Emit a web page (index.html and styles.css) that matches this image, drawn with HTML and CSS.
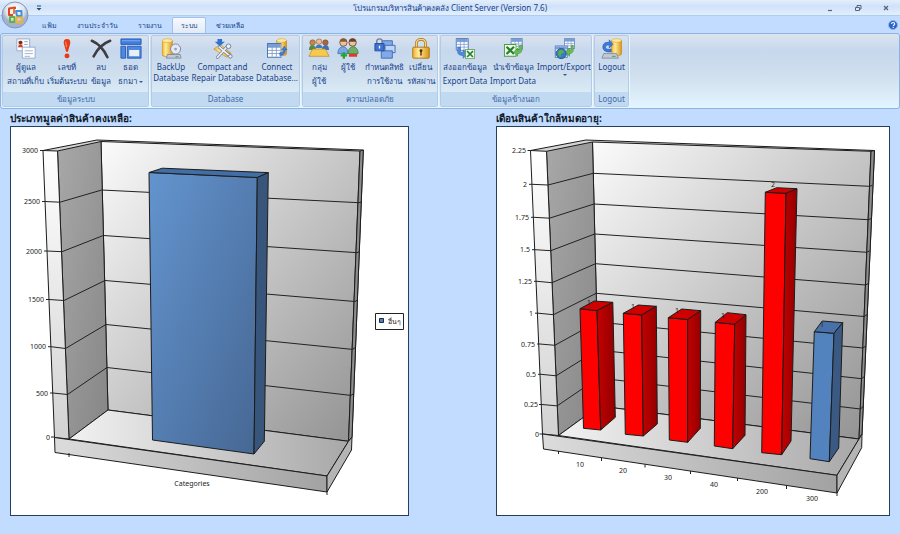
FILE: index.html
```
<!DOCTYPE html>
<html lang="th">
<head>
<meta charset="utf-8">
<title>โปรแกรมบริหารสินค้าคงคลัง Client Server (Version 7.6)</title>
<link rel="stylesheet" href="styles.css">
</head>
<body>
<svg class="defs" aria-hidden="true">
  <defs>
    <linearGradient id="gold" x1="0" x2="1"><stop offset="0" stop-color="#f3b128"/><stop offset=".35" stop-color="#ffeb9b"/><stop offset="1" stop-color="#dc9410"/></linearGradient>
    <linearGradient id="side" x1="0" y1="0" x2="1" y2="1"><stop offset="0" stop-color="#a8a8a8"/><stop offset="1" stop-color="#868686"/></linearGradient>
    <linearGradient id="back" x1="0" y1="0" x2="1" y2="1"><stop offset="0" stop-color="#fbfbfb"/><stop offset="1" stop-color="#929292"/></linearGradient>
    <linearGradient id="edge" x1="0" y1="0" x2="0" y2="1"><stop offset="0" stop-color="#ffffff"/><stop offset="1" stop-color="#d2d2d2"/></linearGradient>
    <linearGradient id="floor" x1="0" x2="1"><stop offset="0" stop-color="#f2f2f2"/><stop offset="1" stop-color="#a8a8a8"/></linearGradient>
    <linearGradient id="slab" x1="0" x2="1"><stop offset="0" stop-color="#dcdcdc"/><stop offset="1" stop-color="#a2a2a2"/></linearGradient>
    <linearGradient id="blue" x1="0" y1="0" x2="1" y2="1"><stop offset="0" stop-color="#6394cf"/><stop offset="1" stop-color="#466793"/></linearGradient>
    <linearGradient id="darkred" x1="0" x2="1"><stop offset="0" stop-color="#c40000"/><stop offset="1" stop-color="#920000"/></linearGradient>
    <symbol id="disk" viewBox="0 0 12 22"><path d="M0 3v16c0 3 12 3 12 0V3z" fill="url(#gold)" stroke="#c08212" stroke-width=".7"/><ellipse cx="6" cy="3" rx="5.7" ry="2.2" fill="#ffe9a0" stroke="#d39a20" stroke-width=".6"/></symbol>
    <symbol id="table" viewBox="0 0 14 14"><path d="M.5.5h13v13H.5z" fill="#fff" stroke="#4a74b8"/><path d="M1 1h12v3H1z" fill="#7c9fd8"/><path d="M5 1v12M9 1v12M1 4h12M1 7h12M1 10h12" stroke="#7698cc" stroke-width=".8"/></symbol>
    <symbol id="excel" viewBox="0 0 12 12"><path d="M.5.5h11v11H.5z" fill="#eff8e9" stroke="#4e9841"/><path d="M2.5 2.5l7 7M9.5 2.5l-7 7" stroke="#268230" stroke-width="2"/></symbol>
  </defs>
</svg>

<header class="shell">
  <button class="orb" aria-label="Office">
    <svg viewBox="0 0 28 28">
      <defs><radialGradient id="orbfill" cy=".3"><stop offset="0" stop-color="#fff"/><stop offset=".7" stop-color="#dfe5ee"/><stop offset="1" stop-color="#9fb2cf"/></radialGradient></defs>
      <circle cx="14" cy="14" r="13" fill="url(#orbfill)" stroke="#8497b6"/>
      <g fill="none" stroke-width="2" stroke-linejoin="round">
        <path d="M14 8V6.500l-6 1V14h4" stroke="#e2461b"/><path d="M13 8v5" stroke="#ee7a2e"/>
        <path d="M15 10h5.500v5H16z" stroke="#3f91dc"/>
        <path d="M9 16h4.500v5H9z" stroke="#64b04a"/>
        <path d="M15.500 16.500H21v5h-5.500z" stroke="#f2b233"/>
      </g>
    </svg>
  </button>
  <div class="titlebar">
    <button class="quick" aria-label="Customize"><svg viewBox="0 0 6 6"><path d="M1 1h4" stroke="#27487c"/><path d="M.5 3h5L3 5.500z" fill="#27487c"/></svg></button>
    <h1>โปรแกรมบริหารสินค้าคงคลัง <span lang="en">Client Server (Version 7.6)</span></h1>
    <div class="window-buttons">
      <button aria-label="Minimize"><svg viewBox="0 0 8 8"><path d="M2 6.500h4" stroke="#56657e" stroke-width="1.200"/></svg></button>
      <button aria-label="Restore"><svg viewBox="0 0 8 8"><path d="M3 3V1.500h4V5H6M1.500 3.500h4v3h-4z" fill="none" stroke="#56657e"/></svg></button>
      <button aria-label="Close"><svg viewBox="0 0 8 8"><path d="M2 2l4 4M6 2L2 6" stroke="#56657e" stroke-width="1.300"/></svg></button>
    </div>
  </div>
  <nav class="tabs">
    <a href="#file">แฟ้ม</a>
    <a href="#daily">งานประจำวัน</a>
    <a href="#reports">รายงาน</a>
    <a href="#system" class="active" aria-current="page">ระบบ</a>
    <a href="#help">ช่วยเหลือ</a>
    <button class="help" aria-label="Help"><svg viewBox="0 0 10 10"><circle cx="5" cy="5" r="4.500" fill="#2b63cc" stroke="#90b3e8"/><path d="M3.500 4c0-2 3.200-2 3.200 0 0 1-1.500 1-1.500 2.200M5.200 7v1" fill="none" stroke="#fff" stroke-width="1.100"/></svg></button>
  </nav>

  <div class="ribbon">
    <section class="group g-system">
      <div class="tools">
        <button><svg viewBox="0 0 24 24"><path d="M2 1h14v13H2z" fill="#fff" stroke="#8ea8cf"/><path d="M3.500 3h5v7h-5z" fill="#eec4b4"/><circle cx="6" cy="5" r="2" fill="#7d2918"/><path d="M3.500 10c0-4 5-4 5 0z" fill="#c8402c"/><path d="M10 4h4M10 7h4" stroke="#8c9fbd"/><path d="M8 10h14v12H8z" fill="#fff" stroke="#8ea8cf"/><path d="M10.500 14h9M10.500 17h9M10.500 20h6" stroke="#9badc8"/></svg><span>ผู้ดูแล<br>สถานที่เก็บ</span></button>
        <button><svg viewBox="0 0 24 24"><path d="M12 1c3 0 4 2 3.500 5L13 15h-2L8.500 6C8 3 9 1 12 1z" fill="#e83b17"/><circle cx="12" cy="19.500" r="2.700" fill="#e83b17"/><path d="M10.500 4l1 6" stroke="#ff9c70"/></svg><span>เลขที่<br>เริ่มต้นระบบ</span></button>
        <button><svg viewBox="0 0 24 24"><path d="M2 3c7 3 13 9 17 18M22 3C14 6 8 12 4 20" fill="none" stroke="#3d3d42" stroke-width="2.800" stroke-linecap="round"/></svg><span>ลบ<br>ข้อมูล</span></button>
        <button><svg viewBox="0 0 24 24"><path d="M1 1h22v6H1z" fill="#3f7ee0" stroke="#2b5bb4"/><path d="M2 3h20" stroke="#83b0f4"/><path d="M1 9h5v13H1zM8 9h15v13H8z" fill="#4d87df" stroke="#2b5bb4"/><path d="M10 13h11v7H10z" fill="#e7effb"/></svg><span>ธอด<br>ธกมา<i class="drop"></i></span></button>
      </div>
      <h2>ข้อมูลระบบ</h2>
    </section>
    <section class="group g-database" lang="en">
      <div class="tools">
        <button><svg viewBox="0 0 24 24"><use href="#disk" x="2" y="0" width="12" height="21"/><circle cx="17" cy="12" r="5.500" fill="#e5e8f0" stroke="#7784a0"/><circle cx="17" cy="12" r="1.500" fill="#8fa0bd"/><path d="M8 18h14l1 4H7z" fill="#c2c9d6" stroke="#68748c" stroke-width=".7"/><path d="M17 20.500h3" stroke="#33a444"/></svg><span>BackUp<br>Database</span></button>
        <button><svg viewBox="0 0 24 24"><path d="M2 12l7-5 12 10-5 4z" fill="url(#gold)" stroke="#bb8220" stroke-width=".6"/><path d="M6 1h5v3h3l-5.500 5L3 4h3z" fill="#2e73d0"/><path d="M6 21L17 9M8 10l12 10" stroke="#727f94" stroke-width="3.500" stroke-linecap="round"/><path d="M6 21L17 9M8 10l12 10" stroke="#edf0f5" stroke-width="2" stroke-linecap="round"/><circle cx="18" cy="9" r="2.500" fill="#edf0f5" stroke="#727f94"/><circle cx="20" cy="20" r="2" fill="#edf0f5" stroke="#727f94"/></svg><span>Compact and<br>Repair Database</span></button>
        <button><svg viewBox="0 0 24 24"><use href="#disk" x="11" y="0" width="12" height="20"/><use href="#table" x="1" y="5" width="16" height="17"/><path d="M15 19c4 0 6-2 6-6l2 0-3-4-3 4h2c0 2-1 3-4 3z" fill="#3b80df" stroke="#2159ad" stroke-width=".5"/></svg><span>Connect<br>Database...</span></button>
      </div>
      <h2>Database</h2>
    </section>
    <section class="group g-security">
      <div class="tools">
        <button><svg viewBox="0 0 24 24"><g stroke="#705038" stroke-width=".6"><circle cx="5" cy="5" r="3" fill="#c8844d"/><circle cx="12" cy="4" r="3" fill="#efbd8e"/><circle cx="19" cy="5" r="3" fill="#ad6335"/></g><path d="M1 13c0-7 7-7 8 0z" fill="#568b43"/><path d="M8 11c0-5 8-5 8 0z" fill="#3d78c0"/><path d="M15 13c1-7 8-7 8 0z" fill="#3e70b8"/><path d="M5 12h14l4 8H1z" fill="#f7c94c" stroke="#b98219" stroke-width=".7"/></svg><span>กลุ่ม<br>ผู้ใช้</span></button>
        <button><svg viewBox="0 0 24 24"><circle cx="7" cy="5" r="4" fill="#eec299" stroke="#815738"/><path d="M3 4c0-5 8-5 8 0z" fill="#8a5a34"/><circle cx="17" cy="5" r="4" fill="#eec299" stroke="#704630"/><path d="M13 4c0-5 8-5 8 0z" fill="#654431"/><path d="M1 17c0-10 11-10 11 0z" fill="#79a7e2" stroke="#4776b8"/><path d="M12 17c0-10 11-10 11 0z" fill="#72ad67" stroke="#478542"/><path d="M4 19h7M7.500 15.500v7" stroke="#24a62e" stroke-width="2.500"/><path d="M13 19h9" stroke="#dc3b28" stroke-width="3"/></svg><span>ผู้ใช้</span></button>
        <button><svg viewBox="0 0 24 24"><path d="M9 3h11v8H9z" fill="#82a9e9" stroke="#3d68b5"/><path d="M12 8h11v8H12z" fill="#bdd2f4" stroke="#3d68b5"/><path d="M8 14h12v8H8z" fill="#82a9e9" stroke="#3d68b5"/><path d="M3 7V4c0-4 6-4 6 0v3" fill="none" stroke="#718098" stroke-width="1.500"/><path d="M1 6h10v8H1z" fill="#3e73d3" stroke="#254c99"/><path d="M6 8.500v3" stroke="#fff" stroke-width="1.500"/></svg><span>กำหนดสิทธิ<br>การใช้งาน</span></button>
        <button><svg viewBox="0 0 24 24"><path d="M7 11V6c0-6 10-6 10 0v5" fill="none" stroke="#a8741a" stroke-width="3"/><path d="M7 11V6c0-6 10-6 10 0v5" fill="none" stroke="#f5d57a" stroke-width="1.500"/><rect x="3" y="10" width="18" height="12" rx="1" fill="url(#gold)" stroke="#a8741a"/><circle cx="12" cy="14" r="1.600" fill="#493313"/><path d="M12 14v5" stroke="#493313" stroke-width="1.500"/></svg><span>เปลี่ยน<br>รหัสผ่าน</span></button>
      </div>
      <h2>ความปลอดภัย</h2>
    </section>
    <section class="group g-external">
      <div class="tools">
        <button><svg viewBox="0 0 24 24"><use href="#table" x="1" y="0" width="16" height="14"/><path d="M4 10v5c0 3 2 4 6 4v3l5-5-5-4v3c-2 0-3 0-3-2v-4z" fill="#4d8de2" stroke="#285faf" stroke-width=".6"/><use href="#excel" x="12" y="12" width="11" height="11"/></svg><span>ส่งออกข้อมูล<br>Export Data</span></button>
        <button><svg viewBox="0 0 24 24"><use href="#table" x="9" y="0" width="14" height="13"/><use href="#excel" x="2" y="5" width="14" height="17"/><path d="M22 8c0 7-1 9-5 9v3l-4-5 4-4v3c2 0 2-2 2-6z" fill="#6cbd50" stroke="#358a30" stroke-width=".6"/></svg><span>นำเข้าข้อมูล<br>Import Data</span></button>
        <button><svg viewBox="0 0 24 24"><use href="#table" x="12" y="0" width="12" height="12"/><use href="#table" x="0" y="8" width="18" height="14"/><circle cx="9" cy="17" r="5.500" fill="#367bc6" stroke="#24568f"/><path d="M6 14c2-2 3 0 5-1l1 3-3 1-1 4c-2-1-3-4-2-7z" fill="#5bb148"/><path d="M22 8c1 7-1 9-4 9v3l-4-5 4-4v3c2 0 2-2 2-6z" fill="#6cbd50" stroke="#358a30" stroke-width=".6"/></svg><span>Import/Export</span><i class="drop"></i></button>
      </div>
      <h2>ข้อมูลข้างนอก</h2>
    </section>
    <section class="group g-logout" lang="en">
      <div class="tools">
        <button><svg viewBox="0 0 24 24"><use href="#disk" x="11" y="0" width="12" height="20"/><path d="M11 15c-6 1-9-2-9-5 0-4 3-6 7-5V2l4 5-4 4V8c-2-1-4 0-4 2 0 2 2 3 6 2z" fill="#3a7be0" stroke="#1e50a6" stroke-width=".6"/><path d="M3 17h14l2 5H1z" fill="#c2c9d6" stroke="#68748c" stroke-width=".7"/><path d="M12 20h4" stroke="#35a644"/></svg><span>Logout</span></button>
      </div>
      <h2>Logout</h2>
    </section>
  </div>
</header>

<main class="charts">
  <section>
    <h2>ประเภทมูลค่าสินค้าคงเหลือ:</h2>
    <svg class="chart" viewBox="11 127 397 388" role="img" aria-label="ประเภทมูลค่าสินค้าคงเหลือ">
      <g class="walls">
        <path d="M43 150.500L97 140l266.300 10L352 437l-3.500 4-12-2z" fill="#d4d4d4"/>
        <path d="M101 141.500L360 151l-11.500 290.300L108 410z" fill="url(#back)"/>
        <path d="M57.500 151L101 141.500 108 410l-39 29z" fill="url(#side)"/>
        <path d="M43 150.500h0l14.500.5L69 439l-14.500-1.500z" fill="url(#edge)"/>
        <path d="M360 151l3.300-1L352 437l-3.500 4.300z" fill="#8d8d8d"/>
        <path d="M69 439l39-29 240.500 31.300L327 476z" fill="url(#floor)"/>
        <path d="M54.500 437.500L327 476v16L55 452.500z" fill="url(#slab)"/>
        <path d="M327 476l21.500-34.700 3.500-4.300-.5 13L327 492z" fill="#b5b5b5"/>
      </g>
      <g class="grid">
        <path d="M42 201.500l3 0 15 .7 41.700-12.200L359 202.700l2.300-.7"/>
        <path d="M44 251l3 0 15 .7 41.300-16.200L357 252.700l2.300-1"/>
        <path d="M46 299.500l3 0 15 1 41-20L355 301.500l2.500-1.500"/>
        <path d="M48 346.700l3 0 14.500 1.800 40.500-24L352.500 349.400l3-2"/>
        <path d="M50 393l3 0 14.500 1.500 39.500-27L351 395.400l3-2"/>
        <path d="M51 437h3M40 150.500h3M69 453v4M327 492v3"/>
      </g>
      <g class="solid">
        <path d="M149 172.500l108.300 5L254 454l-101.500-14z" fill="url(#blue)"/>
        <path d="M149 172.500l13.300-4.300 106 4.400-11 4.900z" fill="#426da5"/>
        <path d="M257.300 177.500l11-4.900-4 268.700L254 454z" fill="#38557b"/>
      </g>
      <g class="labels end">
        <text x="38" y="153">3000</text><text x="40" y="204">2500</text><text x="42" y="254">2000</text><text x="44" y="302">1500</text><text x="46" y="349">1000</text><text x="48" y="396">500</text><text x="50" y="440">0</text>
      </g>
      <g class="labels"><text x="192" y="486">Categories</text></g>
      <path class="legend" d="M375.500 313.500h28v16h-28z"/>
      <path d="M379.500 318.500h4v4h-4z" fill="#4f81bd" stroke="#1d2b40"/>
      <g class="labels"><text x="394" y="324">อื่นๆ</text></g>
    </svg>
  </section>
  <section>
    <h2>เดือนสินค้าใกล้หมดอายุ:</h2>
    <svg class="chart" viewBox="497 127 392 388" role="img" aria-label="เดือนสินค้าใกล้หมดอายุ">
      <g class="walls">
        <path d="M530.500 150.500L586 140l288.500 10.500L862 434l-3 5-12-2z" fill="#d4d4d4"/>
        <path d="M592.500 142L871 151.300 859 439l-260-33z" fill="url(#back)"/>
        <path d="M546.500 151.300L592.500 142 599 406l-40.500 29.500z" fill="url(#side)"/>
        <path d="M530.500 150.500l16 .8 12 284.200-16-1.500z" fill="url(#edge)"/>
        <path d="M871 151.300l3.500-.8L862 434l-3 5z" fill="#8d8d8d"/>
        <path d="M558.500 435.500L599 406l260 33-22 36.300z" fill="url(#floor)"/>
        <path d="M542.500 434L837 475.300V493l-293.500-44z" fill="url(#slab)"/>
        <path d="M837 475.300L859 439l3-5-.3 13.700L837 493z" fill="#b5b5b5"/>
      </g>
      <g class="grid">
        <path d="M529 184.300h3l16 .7 45.300-11.700 276.200 13 3-1"/>
        <path d="M531 217.300h3l15.500.9 44.500-14.200 274 15.700 3-1"/>
        <path d="M532 249.700h3l15.800 1 43.900-16.700 272 18.300 3-1.500"/>
        <path d="M534 281.300h3l15 1.400 43.500-19 270 21.300 3-1.500"/>
        <path d="M535 313.200h3l15.500 1.500 42.700-21.400 268 23.200 3-2"/>
        <path d="M537 344h3l14.800 1.300L597 322l265.800 26 3-2"/>
        <path d="M538 374.300h3l15 1.500 41.700-25.800 264 28.700 3-2.500"/>
        <path d="M539 404.500h3l15.200 1.400 41-28 262.300 31.100 3-3"/>
        <path d="M539.500 434h3M527.500 150.500h3M558.500 451v3M601.500 458v3M645 464.500v3M690.500 471v3M737.500 478v3M786.500 486v3M837 493v3"/>
      </g>
      <g class="solid">
        <path d="M580 308.700l17 2 3.700 119.300-17.200-1.700z" fill="#fd0000"/>
        <path d="M580 308.700l14.300-7.700 18.500 1.300L597 310.700z" fill="#d00000"/>
        <path d="M597 310.700l15.800-8.400 2.500 115L600.700 430z" fill="url(#darkred)"/>
        <path d="M623.300 313.300l18.400 1.700 1.600 121-18-1.700z" fill="#fd0000"/>
        <path d="M623.300 313.300l15-8.300 18 1.300-14.600 8.700z" fill="#d00000"/>
        <path d="M641.700 315l14.600-8.700 1 117.700-14 12z" fill="url(#darkred)"/>
        <path d="M668.300 317.700l19.400 1.800v122.800L669.300 440z" fill="#fd0000"/>
        <path d="M668.300 317.700l13.400-8.700 19 1.700-13 8.800z" fill="#d00000"/>
        <path d="M687.700 319.500l13-8.800-.4 117.600-12.600 14z" fill="url(#darkred)"/>
        <path d="M715.300 322.300l19.400 2-2 124.400-18.400-2.700z" fill="#fd0000"/>
        <path d="M715.300 322.300l12-9.600 18.700 2-11.300 9.600z" fill="#d00000"/>
        <path d="M734.700 324.300l11.300-9.600-1 120.600-12.300 13.400z" fill="url(#darkred)"/>
        <path d="M765.300 192.300l20.700 1-4.300 261.400-20-2z" fill="#fd0000"/>
        <path d="M765.300 192.300l11.400-4.600 20.300 1-11 4.600z" fill="#d00000"/>
        <path d="M786 193.300l11-4.600-6 252.300-9.300 13.700z" fill="url(#darkred)"/>
        <path d="M814.300 331.700l19.700 1.600-4.700 128.400-19.300-3z" fill="#5383bf"/>
        <path d="M814.300 331.700l8-10.700 20.400 1.700-8.700 10.600z" fill="#4771a8"/>
        <path d="M834 333.300l8.700-10.600-4 125.300-9.400 13.700z" fill="#3a5a84"/>
      </g>
      <g class="labels end">
        <text x="526" y="153">2.25</text><text x="527" y="187">2</text><text x="529" y="220">1.75</text><text x="530" y="252">1.5</text><text x="532" y="284">1.25</text><text x="533" y="316">1</text><text x="535" y="347">0.75</text><text x="536" y="377">0.5</text><text x="538" y="407">0.25</text><text x="539" y="437">0</text>
      </g>
      <g class="labels">
        <text x="580" y="467">10</text><text x="623" y="473">20</text><text x="668" y="480">30</text><text x="714" y="487">40</text><text x="762" y="494">200</text><text x="812" y="501">300</text>
        <text x="589" y="305">1</text><text x="633" y="309">1</text><text x="677" y="313">1</text><text x="723" y="318">1</text><text x="773" y="187">2</text><text x="822" y="327">1</text>
      </g>
    </svg>
  </section>
</main>
</body>
</html>
```

FILE: styles.css
```
* { box-sizing: border-box; }

body {
  margin: 0;
  min-height: 100vh;
  background: #c1dcfe;
  color: #15428b;
  font: 8px/16px "Noto Sans", "Open Sans", sans-serif;
}

.defs { position: absolute; width: 0; height: 0; }

button {
  padding: 0;
  border: 0;
  background: none;
  color: inherit;
  font: inherit;
}

h1, h2 { margin: 0; font: inherit; }

.shell { position: relative; }

.orb {
  position: absolute;
  top: 1px;
  left: 1px;
  width: 28px;
  height: 28px;
}

.orb svg { display: block; }

.titlebar {
  display: grid;
  grid-template-columns: 1fr auto 1fr;
  align-items: center;
  height: 15px;
  padding: 0 10px;
  background: linear-gradient(#e4effc, #cfe1f9 40%, #e2effd);
}

.titlebar h1 { line-height: 15px; white-space: nowrap; }
.quick { width: 6px; height: 6px; margin-left: 26px; line-height: 0; }
.quick svg { width: 6px; height: 6px; }
.window-buttons { display: flex; justify-content: flex-end; gap: 20px; }
.window-buttons button { width: 8px; height: 8px; line-height: 0; }

.tabs {
  display: flex;
  height: 18px;
  padding: 1px 2px 0 32px;
  border-top: 1px solid #b0cdf0;
}

.tabs a {
  padding: 0 9px;
  border: 1px solid transparent;
  border-bottom: 0;
  color: inherit;
  font-size: 7px;
  text-decoration: none;
  white-space: nowrap;
}

.tabs .active {
  padding: 0 8px;
  border-color: #a2c0e8;
  border-radius: 2px 2px 0 0;
  background: linear-gradient(#f6faff, #e2eaf5);
}

.help { width: 10px; margin-left: auto; }
.help svg { display: block; }

.ribbon {
  display: flex;
  gap: 2px;
  height: 76px;
  padding: 1px;
  border: 1px solid #8db2e3;
  border-radius: 3px;
  background: linear-gradient(#dbe4ef, #c7d8ed 22%, #cfdfee 55%, #e3f5ff);
}

.group {
  display: flex;
  flex-direction: column;
  justify-content: space-between;
  overflow: hidden;
  border: 1px solid #b2cbe6;
  border-radius: 2px;
  box-shadow: 1px 0 0 #eef6fd;
}

.group h2 {
  height: 14px;
  background: #c2daf1;
  color: #3e6aaa;
  line-height: 14px;
  text-align: center;
}

.tools { display: grid; justify-content: center; }
.tools button { display: flex; flex-direction: column; align-items: center; padding-top: 2px; white-space: nowrap; line-height: 14px; }
.tools svg { width: 22px; height: 22px; }
.g-database button { line-height: 11px; }
.g-database .tools span { padding-top: 1px; }

.g-system { width: 147px; }
.g-system .tools { grid-template-columns: 42px 40px 28px 32px; }
.g-database { width: 149px; }
.g-database .tools { grid-template-columns: 38px 65px 44px; }
.g-security { width: 136px; }
.g-security .tools { grid-template-columns: 28px 30px 43px 29px; }
.g-external { width: 152px; }
.g-external .tools { grid-template-columns: 48px 48px 54px; }
.g-logout { width: 35px; }

.drop {
  display: inline-block;
  margin-left: 2px;
  border: 2px solid transparent;
  border-top-color: #36598f;
  border-bottom: 0;
  vertical-align: middle;
}

.charts {
  display: grid;
  grid-template-columns: 399fr 394fr;
  gap: 87px;
  padding: 0 10px 18px;
}

.charts h2 {
  height: 17px;
  color: #101a2c;
  font-size: 10px;
  font-weight: bold;
  line-height: 18px;
  white-space: nowrap;
}

.chart {
  display: block;
  width: 100%;
  border: 1px solid #24405c;
  background: #fff;
}

.walls path, .solid path { stroke: #1c1c1c; stroke-width: 1; stroke-linejoin: round; }
.grid path { fill: none; stroke: #222; stroke-width: 1; }
.labels { fill: #222; font-size: 7px; text-anchor: middle; }
.end { text-anchor: end; }
.legend { fill: #fff; stroke: #222; }
```
